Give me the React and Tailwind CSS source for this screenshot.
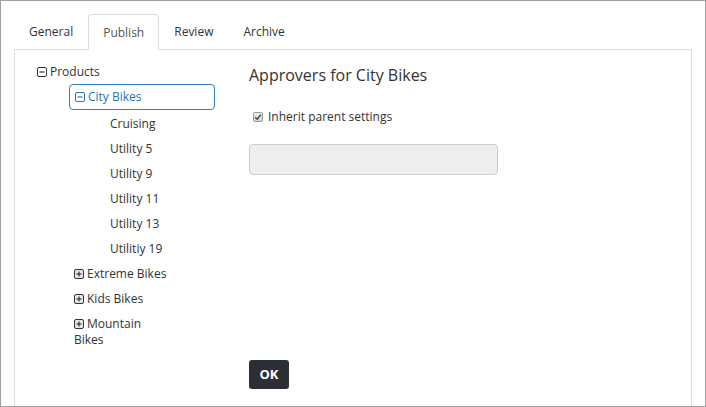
import React from "react";

function Toggle({ open, color = "#333" }) {
  return (
    <svg width="10" height="10" viewBox="0 0 10 10" className="shrink-0">
      <rect x="0.5" y="0.5" width="9" height="9" rx="1.5" fill={open ? "none" : "#e6e6e6"} stroke={color} />
      <line x1="2.5" y1="5" x2="7.5" y2="5" stroke={color} strokeWidth="1.2" />
      {!open && <line x1="5" y1="2.5" x2="5" y2="7.5" stroke={color} strokeWidth="1.2" />}
    </svg>
  );
}

const tabs = ["General", "Publish", "Review", "Archive"];
const leaves = ["Cruising", "Utility 5", "Utility 9", "Utility 11", "Utility 13", "Utilitiy 19"];
const closed = ["Extreme Bikes", "Kids Bikes", "Mountain Bikes"];

export default function App() {
  return (
    <div
      className="w-[706px] h-[407px] overflow-hidden border border-[#a0a0a0] bg-white text-[12px] text-[#333]"
      style={{ fontFamily: "'Open Sans', 'Liberation Sans', sans-serif" }}
    >
      <div className="pl-[13px] pr-[13px] pt-[12px]">
        {/* tabs */}
        <div className="flex h-[36px] items-end">
          {tabs.map((t) => (
            <div
              key={t}
              className={
                t === "Publish"
                  ? "h-[36px] px-[14px] pt-[1px] flex items-center border border-b-0 border-[#ddd] rounded-t-[4px] bg-white text-[#555] relative top-[1px]"
                  : "h-[36px] px-[15px] pt-[2px] flex items-center"
              }
            >
              {t}
            </div>
          ))}
        </div>

        {/* panel */}
        <div className="border border-[#ddd] h-[400px] flex">
          {/* tree */}
          <div className="w-[234px] shrink-0 pt-[9px] pl-[22px]">
            <div className="flex items-center gap-[3px] h-[25px]">
              <Toggle open />
              <span>Products</span>
            </div>
            <div className="pl-[32px]">
              <div className="w-[146px] h-[26px] border border-[#2e7fc1] rounded-[4px] flex items-center gap-[3px] pl-[5px] text-[#2b72b4]">
                <Toggle open color="#2b72b4" />
                <span>City Bikes</span>
              </div>
              <div className="pl-[41px] pt-[1px]">
                {leaves.map((l) => (
                  <div key={l} className="h-[25px] flex items-center">
                    {l}
                  </div>
                ))}
              </div>
              <div className="pl-[5px]">
                {closed.map((c) => (
                  <div key={c} className="w-[96px] py-[4.5px] leading-[16px]">
                    <span className="inline-flex align-[-1px] mr-[3px]">
                      <Toggle />
                    </span>
                    {c}
                  </div>
                ))}
              </div>
            </div>
          </div>

          {/* content */}
          <div className="flex flex-col">
            <div className="mt-[13px] text-[16px] leading-[24px]">Approvers for City Bikes</div>
            <div className="mt-[21px] flex items-center h-[18px]">
              <span className="ml-[4px] w-[10px] h-[10px] border border-[#9a9a9a] rounded-[2px] bg-gradient-to-b from-[#f0f0f0] to-[#d4d4d4] flex items-center justify-center">
                <svg width="8" height="8" viewBox="0 0 8 8">
                  <path d="M1.2 4.2 L3.2 6.2 L6.8 1.6" fill="none" stroke="#444" strokeWidth="1.5" />
                </svg>
              </span>
              <span className="ml-[5px]">Inherit parent settings</span>
            </div>
            <div className="mt-[18px] w-[249px] h-[31px] bg-[#eee] border border-[#ccc] rounded-[4px]" />
            <div className="mt-[185px]">
              <button className="h-[29px] w-[40px] bg-[#2b2f35] text-white font-bold rounded-[3px] text-[13px]">
                OK
              </button>
            </div>
          </div>
        </div>
      </div>
    </div>
  );
}
